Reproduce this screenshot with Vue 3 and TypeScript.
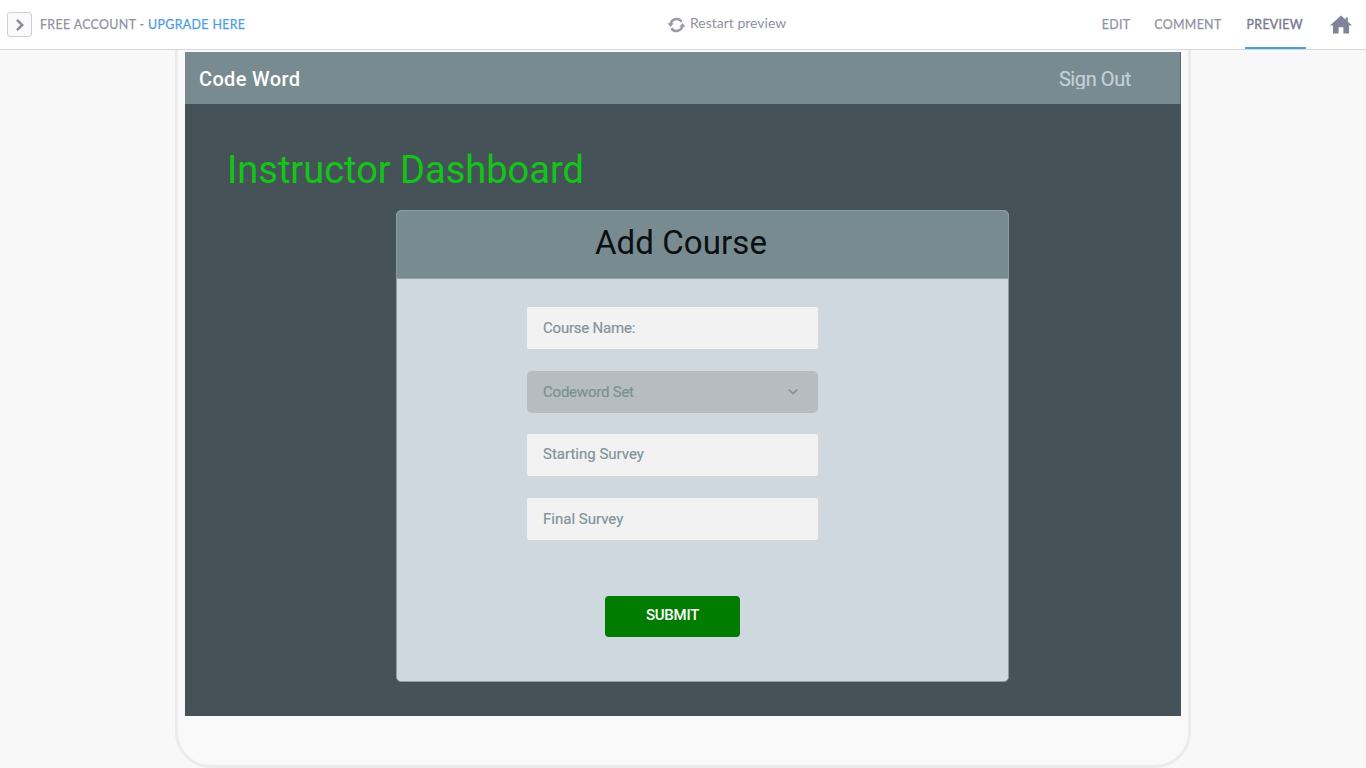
<script setup lang="ts">
import { ref } from 'vue'

type Tab = { id: string; label: string }

const tabs: Tab[] = [
  { id: 'edit', label: 'EDIT' },
  { id: 'comment', label: 'COMMENT' },
  { id: 'preview', label: 'PREVIEW' },
]
const activeTab = ref('preview')
const courseName = ref('')
const startingSurvey = ref('')
const finalSurvey = ref('')
</script>

<template>
  <div class="page">
    <header class="toolbar">
      <div class="account">
        <button class="expand" aria-label="Expand panel">
          <svg width="10" height="14" viewBox="0 0 10 14"><path d="M2 1.8 7.2 7 2 12.2" fill="none" stroke="#8d8d96" stroke-width="2.6" /></svg>
        </button>
        <span class="plan">FREE ACCOUNT - <a class="upgrade">UPGRADE HERE</a></span>
      </div>
      <button class="restart">
        <svg width="17" height="16" viewBox="0 0 17 16">
          <path d="M2.600 7.300A6 6 0 0 1 13.600 4.800M14.400 8.700A6 6 0 0 1 3.400 11.200" fill="none" stroke="#9a9aa8" stroke-width="2.500" />
          <path d="M-.5 6.300h6.200L2.600 9.900zM17.500 9.700h-6.200l3.100-3.600z" fill="#9a9aa8" />
        </svg>
        <span>Restart preview</span>
      </button>
      <nav class="tabs">
        <a v-for="tab in tabs" :key="tab.id" :class="['tab', tab.id, { active: tab.id === activeTab }]" @click="activeTab = tab.id">{{ tab.label }}</a>
        <svg class="home" width="22" height="19" viewBox="0 0 22 19"><path d="M11 .5 0 10.500h3V18.500h5.600V12.200h4.800v6.300H19v-8h3L17.800 6.700V2.500h-2.200v2.200z" fill="#818198" /></svg>
      </nav>
    </header>

    <main class="stage">
      <div class="device">
        <div class="screen">
          <div class="appbar">
            <span class="brand">Code Word</span>
            <a class="signout">Sign Out</a>
          </div>
          <h1 class="title">Instructor Dashboard</h1>
          <section class="card">
            <h2 class="card-title"><span>Add Course</span></h2>
            <form class="form" @submit.prevent>
              <input v-model="courseName" class="field tight" placeholder="Course Name:" />
              <div class="field tight select">
                <span>Codeword Set</span>
                <svg width="12" height="8" viewBox="0 0 12 8"><path d="m1.700 1.700 4.300 4 4.300-4" fill="none" stroke="#829398" stroke-width="1.600" /></svg>
              </div>
              <input v-model="startingSurvey" class="field survey" placeholder="Starting Survey" />
              <input v-model="finalSurvey" class="field last" placeholder="Final Survey" />
              <button class="submit" type="submit">SUBMIT</button>
            </form>
          </section>
        </div>
      </div>
    </main>
  </div>
</template>

<style>
body { margin: 0; overflow: hidden; }
</style>

<style scoped>
* { box-sizing: border-box; }
button, input { font: inherit; margin: 0; border: 0; outline: 0; }
.page { width: 1366px; height: 768px; overflow: hidden; display: flex; flex-direction: column; background: #f8f8f8; font-family: Roboto, sans-serif; }
.toolbar { height: 50px; flex: none; display: grid; grid-template-columns: 668px auto 1fr; background: #fff; border-bottom: 1px solid #d5d8da; font-family: Lato, sans-serif; color: #92929f; }
.account { display: flex; align-items: center; padding-left: 7px; gap: 8px; }
.expand { width: 25px; height: 25px; padding: 0; display: flex; align-items: center; justify-content: center; background: #fafafa; border: 1px solid #cfd0d5; border-radius: 3px; }
.plan { font-size: 12.4px; letter-spacing: .36px; white-space: nowrap; -webkit-text-stroke: .25px currentColor; }
.upgrade { color: #4f9cdf; }
.restart { display: flex; align-items: center; gap: 5px; padding: 0; background: none; color: #92929f; font-size: 14px; }
.restart svg { overflow: visible; }
.restart span { padding-bottom: 4px; }
.tabs { display: flex; justify-content: flex-end; padding-right: 14px; font-size: 12.4px; letter-spacing: .32px; line-height: 49px; -webkit-text-stroke: .25px currentColor; }
.tab { height: 49px; padding: 0 2px; margin-right: 20px; }
.tab.active { padding-right: 3px; color: #7b7b90; border-bottom: 2px solid #4ca0d3; margin-right: 24px; -webkit-text-stroke-width: .4px; }
.tab.comment { margin-right: 21px; }
.home { margin-top: 15px; }

.stage { flex: 1; min-height: 0; display: flex; justify-content: center; align-items: flex-end; overflow: hidden; }
.device { width: 1016px; height: 760px; flex: none; padding: 41px 7px 0; border: 3px solid #ebebeb; border-radius: 36px; background: #f9f9f9; }
.screen { width: 996px; height: 664px; background: #455358; overflow: hidden; }
.appbar { height: 52px; display: flex; justify-content: space-between; align-items: center; padding: 1px 49px 0 14px; background: #788b90; border-right: 1px solid #596c72; font-size: 20px; }
.brand { color: #fff; font-weight: 500; letter-spacing: .35px; }
.signout { color: #c3d0d5; letter-spacing: -.4px; clip-path: inset(0 0 1.5px 0); -webkit-text-stroke: .2px currentColor; }
.title { margin: 43px 0 0 42px; height: 46px; font-size: 38px; line-height: 46px; font-weight: 400; color: #13c516; }
.card { width: 613px; height: 472px; margin: 17px 0 0 211px; border: 1px solid #8c9da2; border-radius: 5px; background: #cfd8de; overflow: hidden; }
.card-title { height: 68px; margin: 0; padding: 0 43px 4px 0; display: flex; align-items: center; justify-content: center; background: #788b90; border-bottom: 1px solid #92a3a7; color: #0b0f10; font-size: 33px; letter-spacing: .1px; font-weight: 400; }
.form { width: 291px; margin: 28px 0 0 130px; display: flex; flex-direction: column; align-items: center; }
.field { width: 291px; height: 42px; margin-bottom: 22px; padding: 0 16px; background: #f2f2f2; border-radius: 2px; color: #82949b; font-size: 15px; line-height: 40px; -webkit-text-stroke: .2px currentColor; }
.field::placeholder { color: #82949b; opacity: 1; }
.tight { letter-spacing: -.22px; }
.select { display: flex; align-items: center; justify-content: space-between; padding-right: 19px; margin-bottom: 21px; border-radius: 5px; background: #b5bdc0; color: #7d9094; }
.field.survey { padding-bottom: 2px; }
.field.last { padding-bottom: 1px; margin-bottom: 56px; }
.submit { width: 135px; height: 41px; padding: 0 0 3px; border-radius: 4px; background: #007c00; color: #fff; font-size: 15px; font-weight: 500; letter-spacing: -.25px; }
</style>
